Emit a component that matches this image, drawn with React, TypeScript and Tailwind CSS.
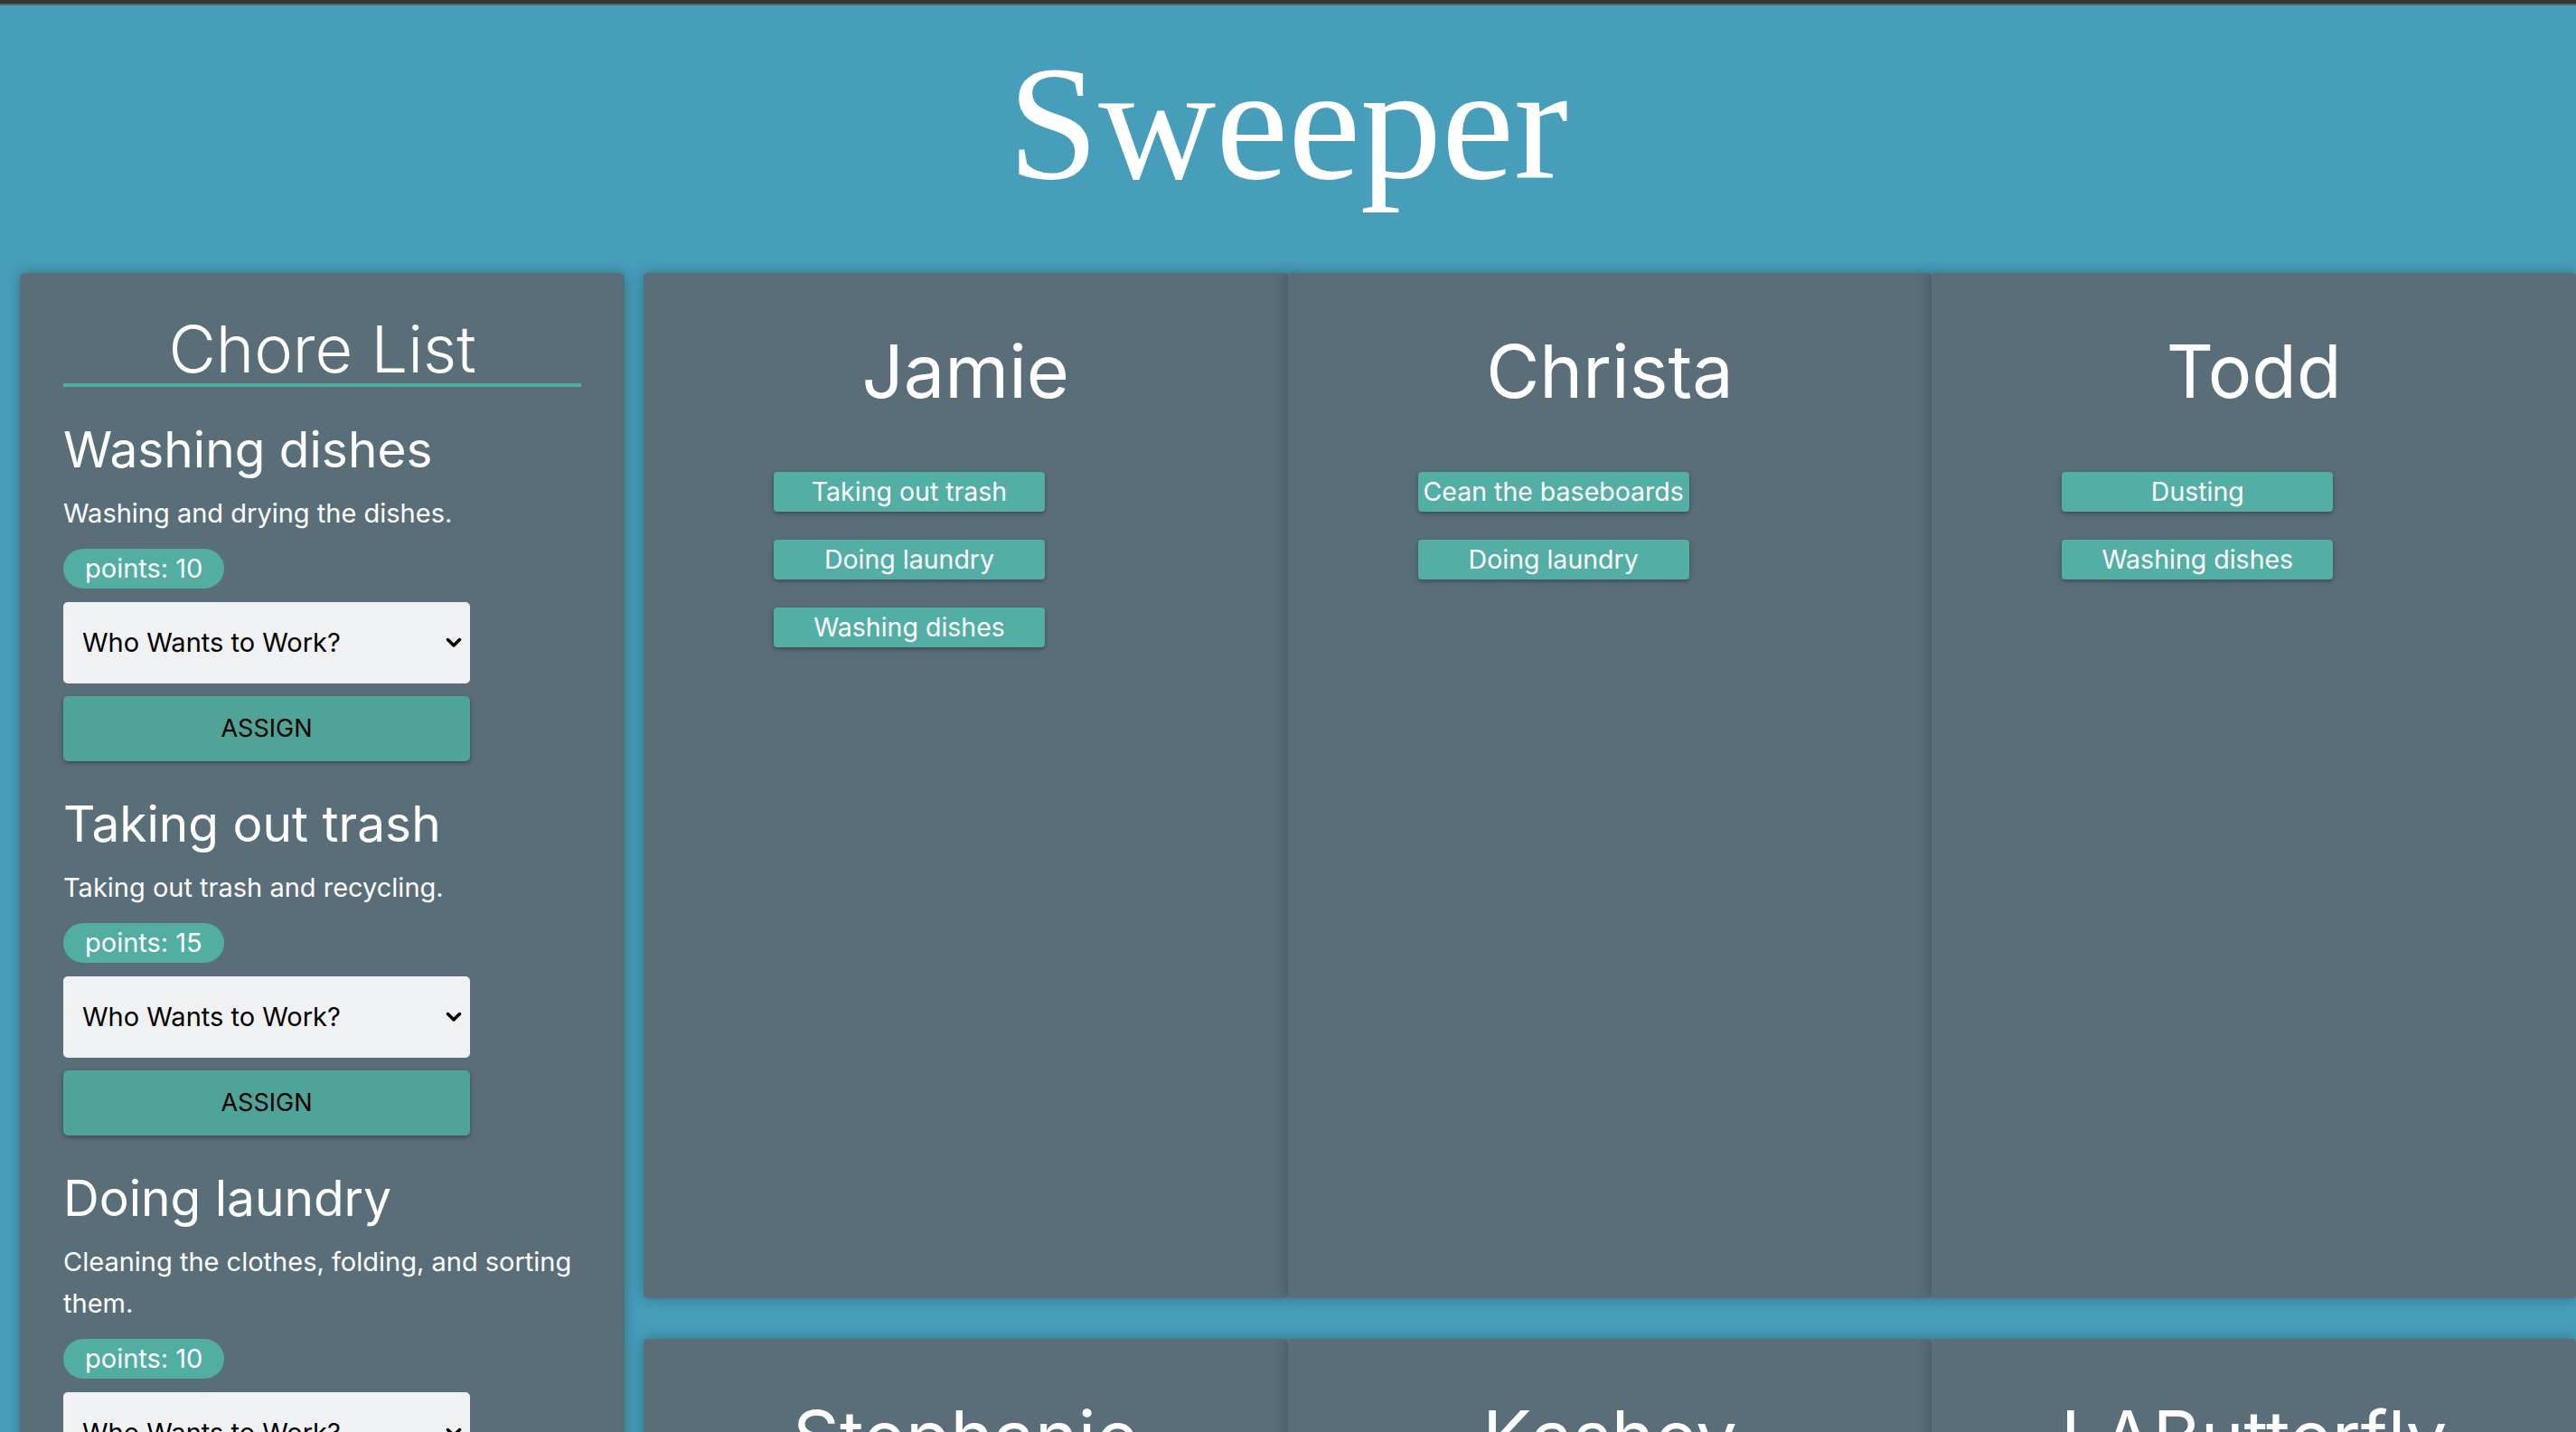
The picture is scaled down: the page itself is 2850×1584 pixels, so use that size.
const chores = [
  { name: 'Washing dishes', description: 'Washing and drying the dishes.', points: 10 },
  { name: 'Taking out trash', description: 'Taking out trash and recycling.', points: 15 },
  { name: 'Doing laundry', description: 'Cleaning the clothes, folding, and sorting them.', points: 10 },
  { name: 'Dusting', description: 'Dusting the shelves and the tables.', points: 5 },
  { name: 'Cean the baseboards', description: 'Wiping down all of the baseboards.', points: 20 },
]

const people = [
  { name: 'Jamie', chores: ['Taking out trash', 'Doing laundry', 'Washing dishes'] },
  { name: 'Christa', chores: ['Cean the baseboards', 'Doing laundry'] },
  { name: 'Todd', chores: ['Dusting', 'Washing dishes'] },
  { name: 'Stephanie', chores: [] as string[] },
  { name: 'Kashey', chores: [] as string[] },
  { name: 'LAButterfly', chores: [] as string[] },
]

function ChoreItem({ name, description, points }: { name: string; description: string; points: number }) {
  return (
    <div className="mt-[37px]">
      <h3 className="text-[55px] leading-[64px]">{name}</h3>
      <p className="mt-[16px] text-[29px] leading-[46px]">{description}</p>
      <div className="mt-4">
        <span className="inline-block rounded-full bg-[#52ada3] px-6 text-[29px] leading-[44px]">
          points: {points}
        </span>
      </div>
      <div className="relative mt-[15px] w-[450px]">
        <select
          defaultValue=""
          className="h-[90px] w-full appearance-none rounded-[5px] bg-[#f0f1f3] pl-[21px] text-[29px] text-black outline-none"
        >
          <option value="">Who Wants to Work?</option>
          {people.map((p) => (
            <option key={p.name} value={p.name}>
              {p.name}
            </option>
          ))}
        </select>
        <svg
          width="18"
          height="12"
          viewBox="0 0 18 12"
          className="pointer-events-none absolute right-[9px] top-[39px]"
        >
          <path d="M2.5 2.5 L9 9 L15.5 2.5" fill="none" stroke="black" strokeWidth="3.5" strokeLinecap="round" strokeLinejoin="round" />
        </svg>
      </div>
      <button className="mt-[14px] h-[72px] w-[450px] rounded-[5px] bg-[#50a398] text-[27px] text-black shadow-[0_2px_5px_rgba(0,0,0,0.35)]">
        ASSIGN
      </button>
    </div>
  )
}

function PersonCard({ name, chores }: { name: string; chores: string[] }) {
  return (
    <div className="h-[1134px] rounded-[4px] bg-[#5a6e7a] pt-[60px] shadow-[0_0_16px_rgba(0,0,0,0.3)]">
      <h2 className="text-center text-[81px] leading-[98px]">{name}</h2>
      <ul className="mt-[62px] flex flex-col gap-[31px] pl-[144px]">
        {chores.map((c) => (
          <li
            key={c}
            className="h-[44px] w-[300px] whitespace-nowrap rounded-[4px] bg-[#53aea5] text-center text-[28.5px] leading-[44px] shadow-[0_2px_5px_rgba(0,0,0,0.35)]"
          >
            {c}
          </li>
        ))}
      </ul>
    </div>
  )
}

export default function App() {
  return (
    <div className="min-h-screen bg-[#479ebb] font-['Inter',sans-serif] text-white">
      <div className="h-1 bg-[#353535]" />
      <div className="h-[2px] bg-[#5b6166]" />

      {/* Title */}
      <header className="pt-[41px] pb-[75px]">
        <h1 className="text-center font-['Liberation_Serif',serif] text-[180px] leading-[180px]">Sweeper</h1>
      </header>

      <main className="flex items-start gap-[21px] pl-[22px]">
        {/* Chore list */}
        <aside className="w-[669px] shrink-0 rounded-md bg-[#5a6e7a] px-12 pt-[46px] pb-12 shadow-[0_0_16px_rgba(0,0,0,0.3)]">
          <h2 className="border-b-4 border-[#52ada2] text-center text-[72px] font-light leading-[76px]">Chore List</h2>
          {chores.map((c) => (
            <ChoreItem key={c.name} {...c} />
          ))}
        </aside>

        {/* People */}
        <section className="grid flex-1 grid-cols-3 gap-y-[45px]">
          {people.map((p) => (
            <PersonCard key={p.name} {...p} />
          ))}
        </section>
      </main>
    </div>
  )
}
